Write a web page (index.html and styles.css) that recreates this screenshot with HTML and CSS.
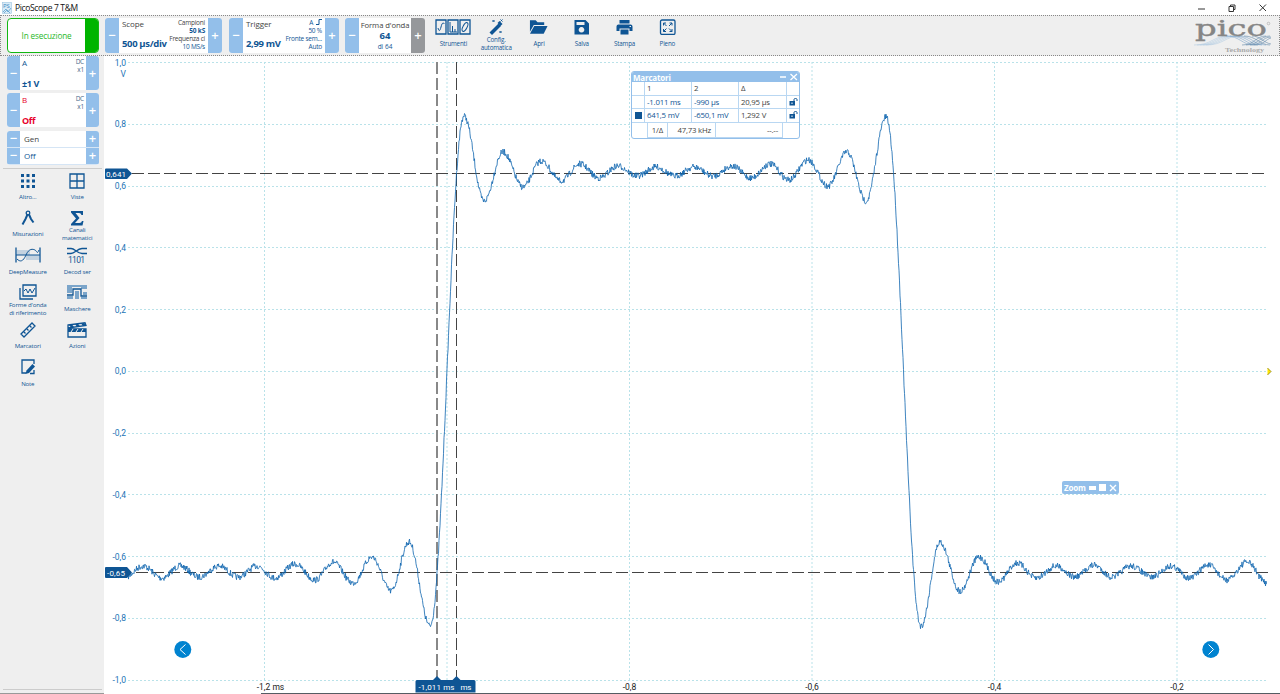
FILE: index.html
```
<!DOCTYPE html>
<html lang="it">
<head>
    <meta charset="UTF-8">
    <meta name="viewport" content="width=device-width, initial-scale=1.0">
    <title>PicoScope 7 T&amp;M</title>
    <link rel="stylesheet" href="styles.css">
</head>
<body>

<header class="titlebar">
    <svg class="app-icon" viewBox="0 0 10 12"><rect x=".5" y=".5" width="9" height="11" fill="#d9ebf7" stroke="#9cc3e0" stroke-width=".6"/><path d="M1 10L4 7L6 10L9 6M2 11L5 8L8 11" fill="none" stroke="#5d9fce" stroke-width=".8"/><text x="1" y="6">PS</text></svg>
    <span class="app-name">PicoScope 7 T&amp;M</span>
    <svg class="win-buttons" viewBox="0 0 70 10"><path d="M0 6H7M31 3.500H35.500V8.500H31ZM32.500 3.500V2H37V6.500H35.500M61.500 1.500L68 8M68 1.500L61.500 8"/></svg>
</header>

<div class="toolbar">
    <button class="status"><span>In esecuzione</span><i></i></button>

    <div class="box scope">
        <b class="step">−</b>
        <div class="body">
            <div class="left"><span class="name">Scope</span><strong>500 µs/div</strong></div>
            <div class="right"><span>Campioni</span><span class="bold">50 kS</span><span>Frequenza ci</span><span class="blue">10 MS/s</span></div>
        </div>
        <b class="step">+</b>
    </div>

    <div class="box trigger">
        <b class="step">−</b>
        <div class="body">
            <div class="left"><span class="name">Trigger</span><strong>2,99 mV</strong></div>
            <div class="right blue"><span>A &nbsp;<svg class="edge" viewBox="0 0 6 6"><path d="M0 5.500H3V.5H6"/></svg></span><span>50 %</span><span>Fronte sem...</span><span>Auto</span></div>
        </div>
        <b class="step">+</b>
    </div>

    <div class="box wave">
        <b class="step">−</b>
        <div class="body center"><span class="name">Forma d'onda</span><strong>64</strong><span class="blue">di 64</span></div>
        <b class="step gray">+</b>
    </div>

    <nav class="tools">
        <a><svg class="wide" viewBox="0 0 36 16"><path class="line" d="M1 1H11V15H1ZM13 1H23V15H13ZM25 1H35V15H25Z"/><path class="thin" d="M3 9C4 13 5 12 6 8S8 3 9.500 5M15 3V13H22M17.500 13V7M20 13V10"/><ellipse class="thin" cx="30" cy="8" rx="2" ry="4.800" transform="rotate(28 30 8)"/></svg><span>Strumenti</span></a>
        <a><svg viewBox="0 0 16 16"><path d="M1 13.500L10 4.500L12.500 7L3.500 16Z"/><path d="M9 4L11 2L14 5L12 7Z"/><path class="thin" d="M4 1L6 3M6 1L4 3M12 .5L14 2.500M14 .5L12 2.500M11 12L13 14M13 12L11 14"/></svg><span>Config.<br>automatica</span></a>
        <a><svg viewBox="0 0 20 16"><path d="M1 1H7L9 3H16V6H5L1 13Z"/><path d="M5.500 7H19.500L15.500 15H1Z"/></svg><span>Apri</span></a>
        <a><svg viewBox="0 0 16 16"><path fill-rule="evenodd" d="M1 1H12L15.500 4.500V15.500H1ZM3 3V6H11V3ZM8 8A2.800 2.800 0 1 0 8.010 8Z"/></svg><span>Salva</span></a>
        <a><svg viewBox="0 0 18 16"><path fill-rule="evenodd" d="M4 1H14V4.500H4ZM3 5.500H15Q17 5.500 17 7.500V12H14V9.500H4V12H1V7.500Q1 5.500 3 5.500ZM14 7V8H15.500V7ZM5 10.500H13V15.500H5Z"/></svg><span>Stampa</span></a>
        <a><svg viewBox="0 0 16 16"><rect class="line" x="1" y="1" width="14.500" height="14.500" rx="1.500"/><path class="thin" d="M4 6.500V4H6.500M4 4L7 7M10 4H12.500V6.500M12.500 4L9.500 7M4 10V12.500H6.500M4 12.500L7 9.500M10 12.500H12.500V10M12.500 12.500L9.500 9.500"/></svg><span>Pieno</span></a>
    </nav>

    <svg class="logo" viewBox="0 0 80 40">
        <g fill="none" stroke-width=".6">
            <path stroke="#b4cce3" d="M0 29C18 29 19 20 34 20M3 29C21 29 22 20 37 20M6 29C24 29 25 20 40 20M9 29C27 29 28 20 43 20M12 29C30 29 31 20 46 20"/>
            <path stroke="#7fa6cb" d="M32 20C46 20 48 29 60 29M36 20C50 20 52 29 64 29M40 20C54 20 56 29 68 29M44 20C58 20 60 29 72 29"/>
            <path stroke="#5f87a8" d="M48 29C60 29 62 20 72 20M52 29C64 29 66 20 76 20M56 29C68 29 68 21 77 21M60 29C70 29 72 23 77 22M50 20C62 20 66 29 76 29M58 20C66 20 70 27 77 28"/>
        </g>
        <text class="logo-name" x="1" y="20" textLength="72" lengthAdjust="spacingAndGlyphs">pico</text>
        <text class="logo-sub" x="31" y="35.500" textLength="39" lengthAdjust="spacingAndGlyphs">Technology</text>
        <circle cx="74.500" cy="7.500" r="1.300" fill="none" stroke="#999" stroke-width=".5"/>
    </svg>
</div>

<main>
    <aside class="sidebar">
        <div class="box channel">
            <b class="step">−</b>
            <div class="body"><div class="left"><span>A</span><strong>±1 V</strong></div><div class="right"><span>DC</span><span>x1</span></div></div>
            <b class="step">+</b>
        </div>
        <div class="box channel red">
            <b class="step">−</b>
            <div class="body"><div class="left"><span>B</span><strong>Off</strong></div><div class="right"><span>DC</span><span>x1</span></div></div>
            <b class="step">+</b>
        </div>
        <div class="gen">
            <div><b class="step">−</b><span>Gen</span><b class="step">+</b></div>
            <div><b class="step">−</b><span class="blue">Off</span><b class="step">+</b></div>
        </div>
        <nav class="menu">
            <a><svg viewBox="0 0 16 16"><path d="M1 1h3v3H1zM6.500 1h3v3h-3zM12 1h3v3h-3zM1 6.500h3v3H1zM6.500 6.500h3v3h-3zM12 6.500h3v3h-3zM1 12h3v3H1zM6.500 12h3v3h-3zM12 12h3v3h-3z"/></svg><span>Altro...</span></a>
            <a><svg viewBox="0 0 16 16"><path class="line" d="M1 1H15V15H1ZM8 1V15M1 8H15"/></svg><span>Viste</span></a>
            <a><svg viewBox="0 0 16 16"><circle class="line" cx="8" cy="3" r="1.800"/><path class="bold-line" d="M7.500 4.500L5.500 9L2.500 14.500M9 4.500L11 9L13.500 12.500"/></svg><span>Misurazioni</span></a>
            <a><svg viewBox="0 0 16 16"><path d="M2 1H14V5H12.500Q12 3 10 3H6.500L10.500 8L6 13H10.500Q12.500 13 13 11H14.500L13.500 15.500H2V14L7 8.500L2 2.500Z"/></svg><span>Canali<br>matematici</span></a>
            <a><svg class="medium" viewBox="0 0 26 16"><path class="pale" d="M2 3H15V8H2ZM11 8H24V13H11Z"/><path class="line" d="M1 .5V15.500M25 .5V15.500"/><path class="thin" d="M1 8H25M2 12C5 15 8 15 11 8S18 2 20 3S22 8 24 3"/></svg><span>DeepMeasure</span></a>
            <a><svg class="medium" viewBox="0 0 20 16"><path class="line" d="M0 1.500H4C8 1.500 10 6.500 15 6.500H20M0 6.500H4C8 6.500 10 1.500 15 1.500H20"/><text class="bits" x="1" y="15.500" textLength="17">1101</text></svg><span>Decod ser</span></a>
            <a><svg viewBox="0 0 18 16"><path class="line" d="M4 1H17V12H4ZM1 4V15H14"/><path class="thin" d="M5 7L7 5L9 9L11 5L13 9L16 4"/></svg><span>Forme d'onda<br>di riferimento</span></a>
            <a><svg class="medium" viewBox="0 0 20 16"><path class="soft" d="M0 1H20V5H14V3H5V9H0ZM8 7H12V15H8ZM16 8H20V11H16ZM0 12H6V15H0ZM14 13H20V15H14Z"/><path class="line" d="M0 11H6V5H14V12H20"/></svg><span>Maschere</span></a>
            <a><svg viewBox="0 0 16 16"><path class="line" d="M1 12L12 1L15 4L4 15ZM4 10L5.500 11.500M7 7L8.500 8.500M10 4L11.500 5.500"/></svg><span>Marcatori</span></a>
            <a><svg class="medium" viewBox="0 0 20 16"><path class="line" d="M1 7H19V15H1ZM1 3L18 .8L19 3.500L1 6Z"/><path d="M1 7H19V10H1ZM2 3L5 2.600L7 5L4 5.500ZM8 2.200L11 1.800L13 4.300L10 4.700ZM14 1.400L17 1L19 3.500L16 4Z"/><path class="cut" d="M4 10L6 7M9 10L11 7M14 10L16 7"/></svg><span>Azioni</span></a>
            <a><svg viewBox="0 0 16 16"><path class="line" d="M14 5V1H2V14H6"/><path d="M6.500 11.500L12.500 5L15 7.500L9 14L5.500 15Z"/><path class="line" d="M10 14.500H14V11"/></svg><span>Note</span></a>
        </nav>
    </aside>

    <section class="plot">
        <svg id="chart" viewBox="104 56 1176 638">
            <g id="grid"></g>
            <text class="axis-y" x="126" y="77">V</text>
            <g class="marker-lines">
                <path class="double" d="M437 62V680"/>
                <path d="M456.500 62V680"/>
                <path d="M132 173.500H1268"/>
                <path d="M136 572.500H1268"/>
            </g>
            <path id="trace"/>
            <g class="tags">
                <path d="M106 168.500H127L132 173.500L127 179H106Q105 179 105 178V169.500Q105 168.500 106 168.500ZM106 567H127L132 572.500L127 578H106Q105 578 105 577V568Q105 567 106 567ZM417 680H433L437 676L441 680H452.500L456.500 676L460.500 680H474Q475.500 680 475.500 681.500V692.500H415.500V681.500Q415.500 680 417 680Z"/>
                <text x="106" y="176.800" textLength="20">0,641</text>
                <text x="107" y="575.800" textLength="18">-0,65</text>
                <text x="418.500" y="690" textLength="36">-1,011 ms</text>
                <text x="460.500" y="690" textLength="11">ms</text>
            </g>
            <g class="scroll"><circle cx="182.800" cy="649.500" r="8.500"/><circle cx="1210.800" cy="649.500" r="8.500"/><path d="M185.500 644.500L180 649.500L185.500 654.500M1208.500 644.500L1213.500 649.500L1208.500 654.500"/></g>
            <path class="trig-mark" d="M1267.500 368L1271 371.500L1267.500 375"/>
            <path class="bottom-line" d="M261 693.500H1280"/>
        </svg>

        <div class="markers">
            <div class="head"><span>Marcatori</span><svg viewBox="0 0 18 8"><path d="M0 4H6M10.500 1L17 7M17 1L10.500 7"/></svg></div>
            <div class="row"><span></span><span>1</span><span>2</span><span>Δ</span><span></span></div>
            <div class="row"><span></span><span class="blue">-1.011 ms</span><span class="blue">-990 µs</span><span>20,95 µs</span><span><svg class="lock" viewBox="0 0 9 8"><path d="M.5 3H6V7.500H.5Z"/><path class="thin" d="M5 3V1.500Q5 .5 6.500 .5T8 1.500V3"/><path class="hole" d="M3 4.500V6"/></svg></span></div>
            <div class="row"><span><i class="square"></i></span><span class="blue">641,5 mV</span><span class="blue">-650,1 mV</span><span>1,292 V</span><span><svg class="lock" viewBox="0 0 9 8"><path d="M.5 3H6V7.500H.5Z"/><path class="thin" d="M5 3V1.500Q5 .5 6.500 .5T8 1.500V3"/><path class="hole" d="M3 4.500V6"/></svg></span></div>
            <div class="foot"><span>1/Δ</span><span>47,73 kHz</span><span>--.--</span></div>
        </div>

        <div class="zoom"><span>Zoom</span><i class="min"></i><i class="max"></i><svg viewBox="0 0 8 8"><path d="M1 1L7 7M7 1L1 7"/></svg></div>
    </section>
</main>

<script src="chart.js"></script>
</body>
</html>
```

FILE: chart.js
```
const grid = document.getElementById('grid');
const NS = 'http://www.w3.org/2000/svg';

function add(tag, attrs, text) {
    const el = document.createElementNS(NS, tag);
    for (const key in attrs) el.setAttribute(key, attrs[key]);
    if (text) el.textContent = text;
    grid.appendChild(el);
}

// horizontal divisions, 0.2 V each
for (let i = 0; i <= 10; i++) {
    const y = 62.5 + i * 61.75;
    add('path', { d: `M128 ${Math.floor(y) + 0.5}H1267` });
    add('text', { x: 126, y: y + 3, class: 'axis-y' }, (1 - i * 0.2).toFixed(1).replace('.', ','));
}

// vertical divisions, the -1,0 label is covered by the time markers
['-1,2 ms', '', '-0,8', '-0,6', '-0,4', '-0,2'].forEach(function (label, i) {
    const x = 264.5 + i * 182.5;
    add('path', { d: `M${x} 62V680` });
    if (label) add('text', { x: i ? x : x + 6, y: 690, class: 'axis-x' }, label);
});

// turning points of the signal
const points = [
    [124, 578], [143, 566], [162, 578], [180, 566], [199, 577], [219, 566], [238, 577], [257, 566],
    [275, 578], [295, 564], [315, 580], [333, 562], [353, 583], [372, 557], [391, 591],
    [409, 542], [430, 626], [464, 116], [484, 201], [503, 152], [523, 187], [541, 161],
    [561, 181], [580, 164], [599, 178], [618, 166], [637, 176], [656, 167], [675, 176],
    [694, 167], [713, 176], [732, 166], [751, 178], [770, 164], [789, 180], [808, 160],
    [828, 186], [847, 152], [866, 201], [886, 117], [921, 626], [940, 542], [960, 591],
    [979, 557], [998, 582], [1017, 563], [1036, 578], [1056, 566], [1075, 577], [1094, 565],
    [1112, 577], [1131, 566], [1152, 577], [1171, 566], [1190, 578], [1208, 565], [1227, 580],
    [1247, 562], [1267, 583]
];

let seed = 7;
function noise() {
    seed = (seed * 16807) % 2147483647;
    return seed / 2147483647 - 0.5;
}

let d = '';
let n = 0;
for (let x = 128; x <= 1267; x += 0.5) {
    while (x > points[n + 1][0]) n++;
    const [x0, y0] = points[n];
    const [x1, y1] = points[n + 1];
    const t = (1 - Math.cos(Math.PI * (x - x0) / (x1 - x0))) / 2;
    const y = y0 + (y1 - y0) * t + noise() * 6.5;
    d += (d ? 'L' : 'M') + x.toFixed(1) + ' ' + y.toFixed(1);
}
document.getElementById('trace').setAttribute('d', d);
```

FILE: styles.css
```
* {
    box-sizing: border-box;
}

body {
    margin: 0;
    width: 1280px;
    height: 694px;
    overflow: hidden;
    background: #fff;
    color: #444;
    font-family: "Open Sans", "Noto Sans", sans-serif;
    font-size: 8px;
}

.blue {
    color: #0f5594;
}

.titlebar {
    display: flex;
    align-items: center;
    height: 15px;
    padding: 0 12px 0 2px;
}

.app-icon {
    width: 10px;
    height: 12px;
}

.app-icon text {
    font-size: 6px;
    fill: #3987c1;
}

.app-name {
    flex: 1;
    padding-left: 3px;
    font-size: 8.5px;
    letter-spacing: -0.35px;
    color: #111;
}

.win-buttons {
    width: 70px;
    height: 10px;
    fill: none;
    stroke: #333;
}

.toolbar {
    display: flex;
    height: 41px;
    padding: 2px 5px 0 6px;
    background: #efefef;
    border: 1px dotted #888;
}

/* left step buttons + value + right step button */
.box {
    display: flex;
    background: #fff;
    border-radius: 3px;
    overflow: hidden;
    height: 35px;
}

.step {
    flex: none;
    display: flex;
    align-items: center;
    justify-content: center;
    width: 14px;
    background: #93bfea;
    color: #fff;
    font-size: 13px;
    font-weight: 600;
    line-height: 1;
}

.step.gray {
    background: #96989b;
}

.body {
    flex: 1;
    min-width: 0;
    display: flex;
    justify-content: space-between;
    padding: 1px 3px 2px;
    white-space: nowrap;
}

.left {
    display: flex;
    flex-direction: column;
    justify-content: space-between;
    line-height: 10px;
}

.left strong {
    color: #0f5594;
    font-size: 9.5px;
    font-weight: 700;
    line-height: 14px;
    letter-spacing: -0.35px;
}

.right {
    display: flex;
    flex-direction: column;
    align-items: flex-end;
    font-size: 6.5px;
    line-height: 8px;
    letter-spacing: -0.22px;
}

.bold {
    font-weight: 700;
    color: #0f5594;
}

.status {
    display: flex;
    width: 92px;
    height: 35px;
    margin-right: 6px;
    padding: 0;
    border: 1px solid #13b713;
    border-radius: 4px;
    overflow: hidden;
    background: #fff;
    color: #28b828;
    font: 8.2px "Open Sans", sans-serif;
    letter-spacing: -0.15px;
}

.status span {
    flex: 1;
    align-self: center;
}

.status i {
    width: 13px;
    align-self: stretch;
    background: #00b400;
}

.scope {
    width: 117px;
    margin-right: 7px;
}

.trigger {
    width: 110px;
    margin-right: 6px;
}

.wave {
    width: 80px;
    margin-right: 7px;
}

.scope .left {
    width: 44px;
}

.edge {
    width: 6px;
    height: 6px;
    fill: none;
    stroke: #0f5594;
}

.center {
    flex-direction: column;
    align-items: center;
    padding: 2px 0;
    font-size: 6.5px;
}

.center .name {
    font-size: 7.7px;
    line-height: 10px;
}

.center strong {
    color: #0f5594;
    font-size: 9.5px;
    line-height: 12px;
}

.name {
    font-size: 8px;
    letter-spacing: -0.1px;
}

.tools {
    flex: 1;
    display: flex;
}

.tools a {
    display: flex;
    flex-direction: column;
    align-items: center;
    width: 42.8px;
    text-align: center;
    color: #0f5594;
    font-size: 6.2px;
    letter-spacing: -0.15px;
    line-height: 8px;
}

.tools svg {
    flex: none;
    width: 19px;
    height: 16px;
    margin-top: 1px;
}

.tools svg.wide {
    width: 36px;
}

.tools span {
    flex: 1;
    display: flex;
    align-items: center;
    padding-bottom: 2px;
}

.tools svg,
.menu svg,
.lock {
    fill: #0f5594;
    stroke: none;
}

svg .line,
svg .thin,
svg .bold-line {
    fill: none;
    stroke: #0f5594;
    stroke-width: 1.3;
}

svg .thin {
    stroke-width: 1;
}

svg .bold-line {
    stroke-width: 2;
}

svg .pale {
    fill: #c3d2e0;
}

svg .soft {
    fill: #7ba5ca;
}

svg .cut {
    stroke: #efefef;
}

.bits {
    font: 8.5px Roboto, sans-serif;
    letter-spacing: 0;
}

.logo {
    width: 80px;
    height: 40px;
    margin-top: -2px;
}

.logo-name {
    font: 23px "DejaVu Serif", serif;
    fill: #858585;
    stroke: #858585;
    stroke-width: 0.4;
}

.logo-sub {
    font: bold 6.5px "Liberation Serif", serif;
    fill: #aaa;
}

main {
    display: flex;
    height: 638px;
}

.sidebar {
    width: 104px;
    padding: 0 5px 0 7px;
    background: #efefef;
    border-bottom: 1px solid #999;
}

.channel {
    width: 92px;
    height: 34px;
    margin-bottom: 3.3px;
}

.channel .step,
.gen .step {
    width: 13px;
}

.channel .body {
    padding: 2px 2px 1px;
}

.channel .left {
    color: #0f5594;
}

.channel .left strong {
    font-size: 9px;
    line-height: 11px;
}

.channel .right {
    color: #4b6b8b;
}

.channel.red .left,
.channel.red strong {
    color: #e8002b;
}

.gen {
    width: 92px;
    border-radius: 3px;
    overflow: hidden;
}

.gen div {
    display: flex;
    height: 17px;
    background: #fff;
    border-bottom: 1px solid #d5e5f5;
}

.gen span {
    flex: 1;
    padding-left: 4px;
    line-height: 16px;
}

.menu {
    display: grid;
    grid-template-columns: 49.5px 49.5px;
    grid-auto-rows: 37.3px;
    width: 99px;
    height: 522px;
    margin: 3px 0 0 -4px;
    padding-top: 2px;
    border-top: 1px solid #ccc;
    border-bottom: 1px solid #ccc;
}

.menu a {
    display: flex;
    flex-direction: column;
    align-items: center;
    color: #0f5594;
    font-size: 6.1px;
    letter-spacing: -0.15px;
    line-height: 8px;
    text-align: center;
    white-space: nowrap;
}

.menu svg {
    flex: none;
    width: 18px;
    height: 16px;
    margin-top: 2px;
}

.menu svg.medium {
    width: 26px;
}

.menu span {
    display: flex;
    align-items: center;
    height: 17px;
}

.plot {
    position: relative;
    width: 1176px;
}

#chart {
    display: block;
    width: 1176px;
    height: 638px;
    font-family: Roboto, sans-serif;
    font-size: 8.5px;
}

#grid path {
    fill: none;
    stroke: #b9e2e9;
    stroke-dasharray: 2 2;
}

.axis-y {
    text-anchor: end;
    fill: #2273b5;
}

.axis-x {
    text-anchor: middle;
    fill: #222;
}

.marker-lines path {
    stroke: #444;
    stroke-width: 1;
    stroke-dasharray: 12 4;
}

.marker-lines .double {
    stroke: #888;
    stroke-width: 2;
}

#trace {
    fill: none;
    stroke: #0e65ae;
    stroke-width: 0.8;
}

.tags path {
    fill: #0f5594;
}

.tags text {
    fill: #fff;
    font-size: 8px;
}

.scroll circle {
    fill: #0083d0;
}

.scroll path {
    fill: none;
    stroke: #fff;
}

.trig-mark {
    fill: #ffe600;
    stroke: #887b00;
    stroke-width: 0.8;
}

.bottom-line {
    stroke: #555c63;
}

/* floating windows over the plot */
.markers {
    position: absolute;
    left: 527px;
    top: 15px;
    width: 169px;
    height: 68px;
    background: #fff;
    border: 1px solid #93bfea;
    border-radius: 3px;
    overflow: hidden;
    font-size: 7.8px;
    letter-spacing: -0.2px;
    white-space: nowrap;
}

.head {
    display: flex;
    align-items: center;
    justify-content: space-between;
    height: 10px;
    padding: 0 1px;
    background: #93bfea;
    color: #fff;
    font-size: 8px;
    font-weight: 700;
}

.head svg {
    width: 18px;
    height: 8px;
    fill: none;
    stroke: #fff;
    stroke-width: 1.3;
}

.row {
    display: grid;
    grid-template-columns: 13px 47px 47px 48px 12px;
    height: 13.6px;
    line-height: 12px;
    border-bottom: 1px solid #b9d7f2;
}

.row span {
    display: flex;
    align-items: center;
    padding-left: 2px;
    border-right: 1px solid #b9d7f2;
}

.row span:last-child {
    border-right: 0;
}

.lock {
    width: 9px;
    height: 8px;
}

.lock .hole {
    stroke: #fff;
}

.square {
    width: 7px;
    height: 7px;
    margin-left: 1px;
    background: #0f5594;
}

.foot {
    display: grid;
    grid-template-columns: 21px 48px 67px;
    height: 14px;
    margin-left: 15px;
    line-height: 14px;
    text-align: right;
}

.foot span {
    padding-right: 4px;
    border-right: 1px solid #b9d7f2;
    border-bottom: 1px solid #b9d7f2;
}

.foot span:first-child {
    border-left: 1px solid #b9d7f2;
}

.zoom {
    position: absolute;
    left: 958px;
    top: 425px;
    display: flex;
    align-items: center;
    gap: 3px;
    width: 57px;
    height: 13px;
    padding: 0 2px;
    border-radius: 2px;
    background: #93bfea;
    color: #fff;
    font-size: 8px;
    letter-spacing: -0.2px;
    font-weight: 700;
}

.zoom span {
    width: 22px;
}

.zoom i {
    background: #fff;
    width: 7px;
    height: 7px;
}

.zoom .min {
    height: 4px;
}

.zoom svg {
    width: 8px;
    height: 8px;
    stroke: #fff;
    stroke-width: 1.4;
}
```
